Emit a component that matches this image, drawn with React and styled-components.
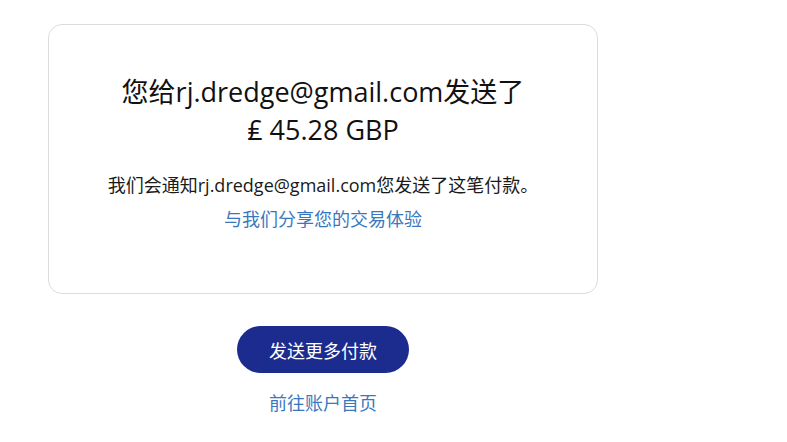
import React from 'react';
import styled, { createGlobalStyle } from 'styled-components';

const GlobalStyle = createGlobalStyle`
  html, body {
    margin: 0;
    padding: 0;
    background: #fff;
  }
  body {
    font-family: "Open Sans", "Noto Sans CJK SC", sans-serif;
    color: #111;
  }
`;

const Page = styled.div`
  width: 550px;
  padding: 24px 0 0 48px;
  display: flex;
  flex-direction: column;
  align-items: center;
`;

const Card = styled.div`
  box-sizing: border-box;
  width: 550px;
  height: 270px;
  border: 1px solid #dcdcdc;
  border-radius: 14px;
  display: flex;
  flex-direction: column;
  align-items: center;
  padding-top: 48px;
`;

const Title = styled.h1`
  margin: 0;
  font-size: 27px;
  font-weight: 400;
  line-height: 38px;
  text-align: center;
  color: #111;
`;

const Note = styled.p`
  margin: 24px 0 0;
  font-size: 18px;
  line-height: 24px;
  color: #1a1a1a;
`;

const Link = styled.a`
  display: block;
  margin-top: ${p => p.$gap || 0}px;
  font-size: 18px;
  line-height: 26px;
  color: #3a78be;
  text-decoration: none;
  cursor: pointer;
`;

const Button = styled.button`
  margin-top: 32px;
  width: 172px;
  height: 47px;
  border: none;
  border-radius: 24px;
  background: #1b2b8e;
  color: #fff;
  font-family: "Open Sans", "Noto Sans CJK SC", sans-serif;
  font-size: 18px;
  cursor: pointer;
`;

export default function App() {
  return (
    <>
      <GlobalStyle />
      <Page>
        <Card>
          <Title>
            您给rj.dredge@gmail.com发送了
            <br />
            ₤ 45.28 GBP
          </Title>
          <Note>我们会通知rj.dredge@gmail.com您发送了这笔付款。</Note>
          <Link $gap={9}>与我们分享您的交易体验</Link>
        </Card>
        <Button>发送更多付款</Button>
        <Link $gap={17}>前往账户首页</Link>
      </Page>
    </>
  );
}
